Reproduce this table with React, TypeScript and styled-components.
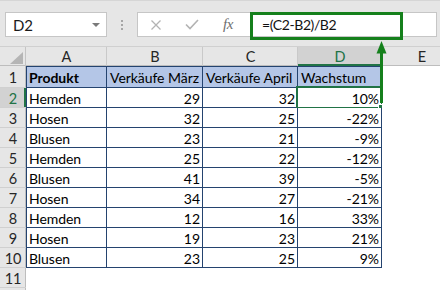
import React from "react";
import styled, { createGlobalStyle, css } from "styled-components";

const GREEN = "#15801c";
const EXCEL_GREEN = "#217346";
const TABLE_LINE = "#24436f";
const HEAD_FILL = "#b4c6e7";
const CHROME = "#e6e6e6";

const GlobalStyle = createGlobalStyle`
  html, body { margin: 0; padding: 0; background: #fff; }
  body { font-family: Lato, "Open Sans", sans-serif; }
`;

const Window = styled.div`
  position: relative;
  width: 440px;
  height: 290px;
  overflow: hidden;
  background: #fff;
  font-family: Lato, "Open Sans", sans-serif;
  font-size: 14px;
  letter-spacing: -0.05px;
  color: #000;
`;

/* ---------- formula bar strip ---------- */

const Toolbar = styled.div`
  box-sizing: border-box;
  height: 47px;
  background: ${CHROME};
  border-top: 1px solid #d6d6d6;
  border-bottom: 1px solid #d0d0d0;
  display: flex;
  align-items: flex-start;
  padding: 11px 0 0 5px;
`;

const NameBox = styled.div`
  box-sizing: border-box;
  width: 102px;
  height: 25px;
  background: #fff;
  border: 1px solid #c6c6c6;
  display: flex;
  align-items: center;
  justify-content: space-between;
  padding: 0 6px 0 7px;
  color: #1a1a1a;
  font-size: 15px;
`;

const DropCaret = styled.span`
  width: 0;
  height: 0;
  border-left: 4px solid transparent;
  border-right: 4px solid transparent;
  border-top: 4px solid #7a7a7a;
`;

const Grip = styled.div`
  width: 2px;
  height: 25px;
  margin: 0 14px;
  display: flex;
  flex-direction: column;
  justify-content: center;
  gap: 2px;
`;

const GripDot = styled.span`
  width: 2px;
  height: 2px;
  background: #a6a6a6;
`;

const FormulaBar = styled.div`
  box-sizing: border-box;
  width: 300px;
  height: 25px;
  background: #fff;
  border: 1px solid #c6c6c6;
  display: flex;
  align-items: center;
`;

const BarButton = styled.span`
  width: 36px;
  height: 23px;
  display: flex;
  align-items: center;
  justify-content: center;
`;

const FxLabel = styled.span`
  font-family: "Liberation Serif", "DejaVu Serif", serif;
  font-style: italic;
  font-size: 15px;
  color: #6e6e6e;
  letter-spacing: -0.5px;
`;

const FormulaText = styled.span`
  padding-left: 16px;
  color: #111;
  font-size: 14px;
  letter-spacing: -0.4px;
  white-space: nowrap;
`;

/* ---------- sheet grid ---------- */

const Sheet = styled.div`
  display: grid;
  grid-template-columns: 26px 81px 96px 95px 84px 80px;
  grid-template-rows: 19px 22px;
  grid-auto-rows: 20px;
`;

const Corner = styled.div`
  background: ${CHROME};
  box-shadow: inset -1px 0 0 #c4c4c4, inset 0 -1px 0 #bdbdbd;
  display: flex;
  align-items: flex-end;
  justify-content: flex-end;
  padding: 0 3px 2px 0;
`;

const ColHead = styled.div<{ $active?: boolean }>`
  display: flex;
  align-items: center;
  justify-content: center;
  font-size: 14.5px;
  background: ${(p) => (p.$active ? "#d2d2d2" : CHROME)};
  color: ${(p) => (p.$active ? EXCEL_GREEN : "#262626")};
  box-shadow: inset -1px 0 0 #c9c9c9,
    ${(p) => (p.$active ? `inset 0 -2px 0 ${EXCEL_GREEN}` : "inset 0 -1px 0 #bdbdbd")};
`;

const RowHead = styled.div<{ $active?: boolean }>`
  display: flex;
  align-items: center;
  justify-content: center;
  font-size: 14.5px;
  background: ${(p) => (p.$active ? "#d2d2d2" : CHROME)};
  color: ${(p) => (p.$active ? EXCEL_GREEN : "#262626")};
  box-shadow: inset 0 -1px 0 #d0d0d0,
    ${(p) => (p.$active ? `inset -2px 0 0 ${EXCEL_GREEN}` : "inset -1px 0 0 #bdbdbd")};
`;

type CellProps = {
  $table?: boolean;
  $head?: boolean;
  $bold?: boolean;
  $num?: boolean;
  $first?: boolean;
  $top?: boolean;
};

const Cell = styled.div<CellProps>`
  position: relative;
  display: flex;
  align-items: center;
  justify-content: ${(p) => (p.$num ? "flex-end" : "flex-start")};
  padding: 1px 3px 0 3px;
  white-space: nowrap;
  background: ${(p) => (p.$head ? HEAD_FILL : "#fff")};
  font-weight: ${(p) => (p.$bold ? 700 : 400)};
  ${(p) =>
    p.$table &&
    css`
      box-shadow: inset -1px -1px 0 ${TABLE_LINE}
        ${p.$first ? `, inset 1px 0 0 ${TABLE_LINE}` : ""}
        ${p.$top ? `, inset 0 1px 0 ${TABLE_LINE}` : ""};
    `}
`;

const SelectionFrame = styled.div`
  position: absolute;
  left: -2px;
  top: -2px;
  right: -1px;
  bottom: -1px;
  border: 2px solid ${EXCEL_GREEN};
  pointer-events: none;
`;

const FillHandle = styled.span`
  position: absolute;
  right: -4px;
  bottom: -4px;
  width: 5px;
  height: 5px;
  background: ${EXCEL_GREEN};
  border: 1px solid #fff;
`;

/* ---------- callout over the formula ---------- */

const FormulaCallout = styled.div`
  position: absolute;
  left: 250px;
  top: 12px;
  width: 153px;
  height: 28px;
  box-sizing: border-box;
  border: 3px solid ${GREEN};
  pointer-events: none;
`;

const CalloutArrow = styled.svg`
  position: absolute;
  left: 370px;
  top: 36px;
  pointer-events: none;
`;

const columns = ["A", "B", "C", "D", "E"];

const header = ["Produkt", "Verkäufe März", "Verkäufe April", "Wachstum"];

const rows: [string, number, number, string][] = [
  ["Hemden", 29, 32, "10%"],
  ["Hosen", 32, 25, "-22%"],
  ["Blusen", 23, 21, "-9%"],
  ["Hemden", 25, 22, "-12%"],
  ["Blusen", 41, 39, "-5%"],
  ["Hosen", 34, 27, "-21%"],
  ["Hemden", 12, 16, "33%"],
  ["Hosen", 19, 23, "21%"],
  ["Blusen", 23, 25, "9%"],
];

const CrossIcon = () => (
  <svg width="12" height="10" viewBox="0 0 12 10">
    <path d="M1.5 0.5 L10.5 9.5 M10.5 0.5 L1.5 9.5" stroke="#b3b3b3" strokeWidth="1.3" fill="none" />
  </svg>
);

const CheckIcon = () => (
  <svg width="14" height="11" viewBox="0 0 14 11">
    <path d="M1 5.5 L5 9.5 L13 1" stroke="#b3b3b3" strokeWidth="1.6" fill="none" />
  </svg>
);

const SelectAllMark = () => (
  <svg width="13" height="12" viewBox="0 0 13 12">
    <path d="M13 0 L13 12 L0 12 Z" fill="#b5b5b5" />
  </svg>
);

export default function App() {
  return (
    <Window>
      <GlobalStyle />
      <Toolbar>
        <NameBox>
          D2
          <DropCaret />
        </NameBox>
        <Grip>
          <GripDot />
          <GripDot />
          <GripDot />
        </Grip>
        <FormulaBar>
          <BarButton>
            <CrossIcon />
          </BarButton>
          <BarButton>
            <CheckIcon />
          </BarButton>
          <BarButton>
            <FxLabel>fx</FxLabel>
          </BarButton>
          <FormulaText>=(C2-B2)/B2</FormulaText>
        </FormulaBar>
      </Toolbar>

      <Sheet>
        <Corner>
          <SelectAllMark />
        </Corner>
        {columns.map((c) => (
          <ColHead key={c} $active={c === "D"}>
            {c}
          </ColHead>
        ))}

        <RowHead>1</RowHead>
        {header.map((h, i) => (
          <Cell key={h} $table $head $top $first={i === 0} $bold={i === 0}>
            {h}
          </Cell>
        ))}
        <Cell />

        {rows.map((r, ri) => {
          const rowNo = ri + 2;
          const active = rowNo === 2;
          return (
            <React.Fragment key={rowNo}>
              <RowHead $active={active}>{rowNo}</RowHead>
              <Cell $table $first>
                {r[0]}
              </Cell>
              <Cell $table $num>
                {r[1]}
              </Cell>
              <Cell $table $num>
                {r[2]}
              </Cell>
              <Cell $table $num>
                {r[3]}
                {active && (
                  <SelectionFrame>
                    <FillHandle />
                  </SelectionFrame>
                )}
              </Cell>
              <Cell />
            </React.Fragment>
          );
        })}

        {/* row 11 is fully visible; row 12 only shows its top edge */}
        <RowHead>11</RowHead>
        {columns.map((c) => (
          <Cell key={`r11-${c}`} />
        ))}
        <RowHead />
        {columns.map((c) => (
          <Cell key={`r12-${c}`} />
        ))}
      </Sheet>

      <FormulaCallout />
      <CalloutArrow width="24" height="70" viewBox="0 0 24 70">
        <path d="M11.5 5 L16.5 17.5 L6.5 17.5 Z" fill={GREEN} />
        <rect x="10" y="16" width="3" height="51" fill={GREEN} />
      </CalloutArrow>
    </Window>
  );
}
